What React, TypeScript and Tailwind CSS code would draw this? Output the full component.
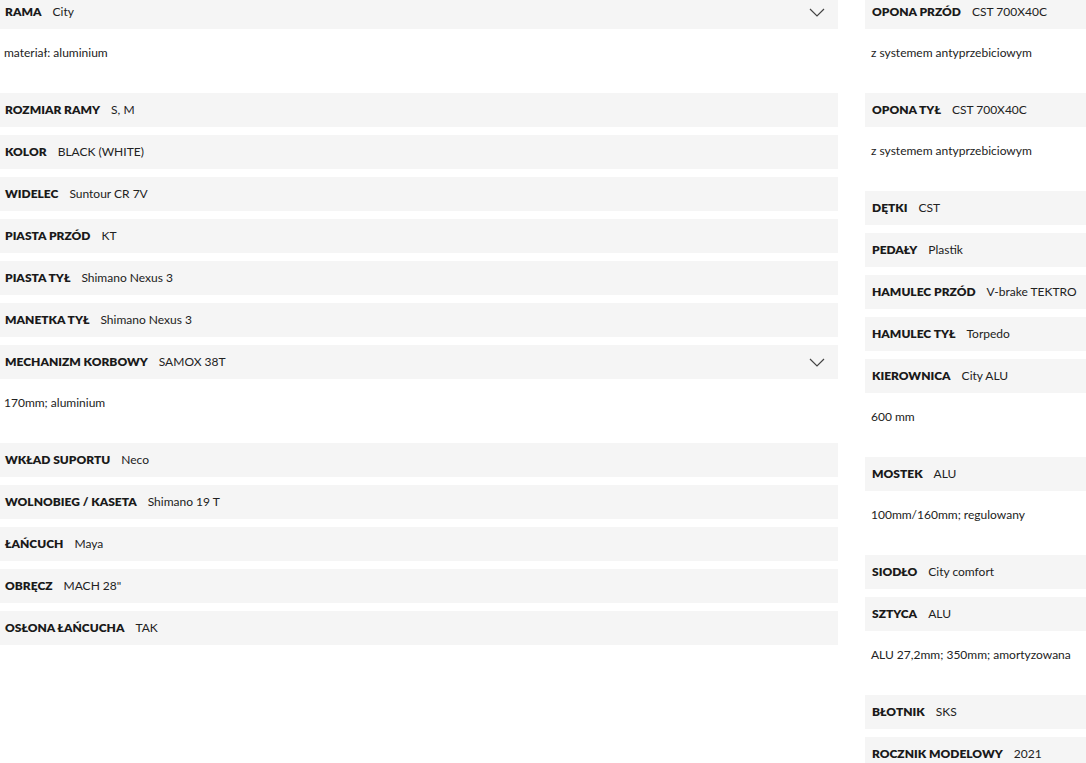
import React from "react";

type Spec = {
  label: string;
  value: string;
  desc?: string;
};

const left: Spec[] = [
  { label: "RAMA", value: "City", desc: "materiał: aluminium" },
  { label: "ROZMIAR RAMY", value: "S, M" },
  { label: "KOLOR", value: "BLACK (WHITE)" },
  { label: "WIDELEC", value: "Suntour CR 7V" },
  { label: "PIASTA PRZÓD", value: "KT" },
  { label: "PIASTA TYŁ", value: "Shimano Nexus 3" },
  { label: "MANETKA TYŁ", value: "Shimano Nexus 3" },
  { label: "MECHANIZM KORBOWY", value: "SAMOX 38T", desc: "170mm; aluminium" },
  { label: "WKŁAD SUPORTU", value: "Neco" },
  { label: "WOLNOBIEG / KASETA", value: "Shimano 19 T" },
  { label: "ŁAŃCUCH", value: "Maya" },
  { label: "OBRĘCZ", value: "MACH 28\"" },
  { label: "OSŁONA ŁAŃCUCHA", value: "TAK" },
];

const right: Spec[] = [
  { label: "OPONA PRZÓD", value: "CST 700X40C", desc: "z systemem antyprzebiciowym" },
  { label: "OPONA TYŁ", value: "CST 700X40C", desc: "z systemem antyprzebiciowym" },
  { label: "DĘTKI", value: "CST" },
  { label: "PEDAŁY", value: "Plastik" },
  { label: "HAMULEC PRZÓD", value: "V-brake TEKTRO" },
  { label: "HAMULEC TYŁ", value: "Torpedo" },
  { label: "KIEROWNICA", value: "City ALU", desc: "600 mm" },
  { label: "MOSTEK", value: "ALU", desc: "100mm/160mm; regulowany" },
  { label: "SIODŁO", value: "City comfort" },
  { label: "SZTYCA", value: "ALU", desc: "ALU 27,2mm; 350mm; amortyzowana" },
  { label: "BŁOTNIK", value: "SKS" },
  { label: "ROCZNIK MODELOWY", value: "2021" },
];

function Chevron() {
  return (
    <svg width="16" height="9" viewBox="0 0 16 9" fill="none" className="shrink-0">
      <polyline points="1,1 8,8 15,1" stroke="#444" strokeWidth="1.2" />
    </svg>
  );
}

function SpecRow({ item, pad, chevron }: { item: Spec; pad: string; chevron: boolean }) {
  return (
    <div className="flex flex-col gap-[8px]">
      <div className={`flex h-[34px] items-center bg-[#f5f5f5] ${pad}`}>
        <span className="text-[12px] font-extrabold text-[#1a1a1a] whitespace-nowrap">{item.label}</span>
        <span className="ml-[11px] text-[12px] text-[#222] whitespace-nowrap">{item.value}</span>
        {item.desc && chevron && (
          <span className="ml-auto mr-[8px]">
            <Chevron />
          </span>
        )}
      </div>
      {item.desc && (
        <div className={`h-[48px] pt-[7px] text-[12px] leading-[18px] text-[#222] whitespace-nowrap ${pad === "px-[5px]" ? "px-[4px]" : "px-[6px]"}`}>
          {item.desc}
        </div>
      )}
    </div>
  );
}

export default function App() {
  return (
    <main className="h-[763px] w-[1086px] overflow-hidden bg-white" style={{ fontFamily: "Lato, 'Noto Sans', sans-serif" }}>
      <div className="-mt-[5px] flex gap-[27px]">
        {/* left column */}
        <div className="flex w-[838px] shrink-0 flex-col gap-[8px]">
          {left.map((item) => (
            <SpecRow key={item.label} item={item} pad="px-[5px]" chevron />
          ))}
        </div>

        {/* right column */}
        <div className="flex w-[260px] shrink-0 flex-col gap-[8px]">
          {right.map((item) => (
            <SpecRow key={item.label} item={item} pad="px-[7px]" chevron={false} />
          ))}
        </div>
      </div>
    </main>
  );
}
